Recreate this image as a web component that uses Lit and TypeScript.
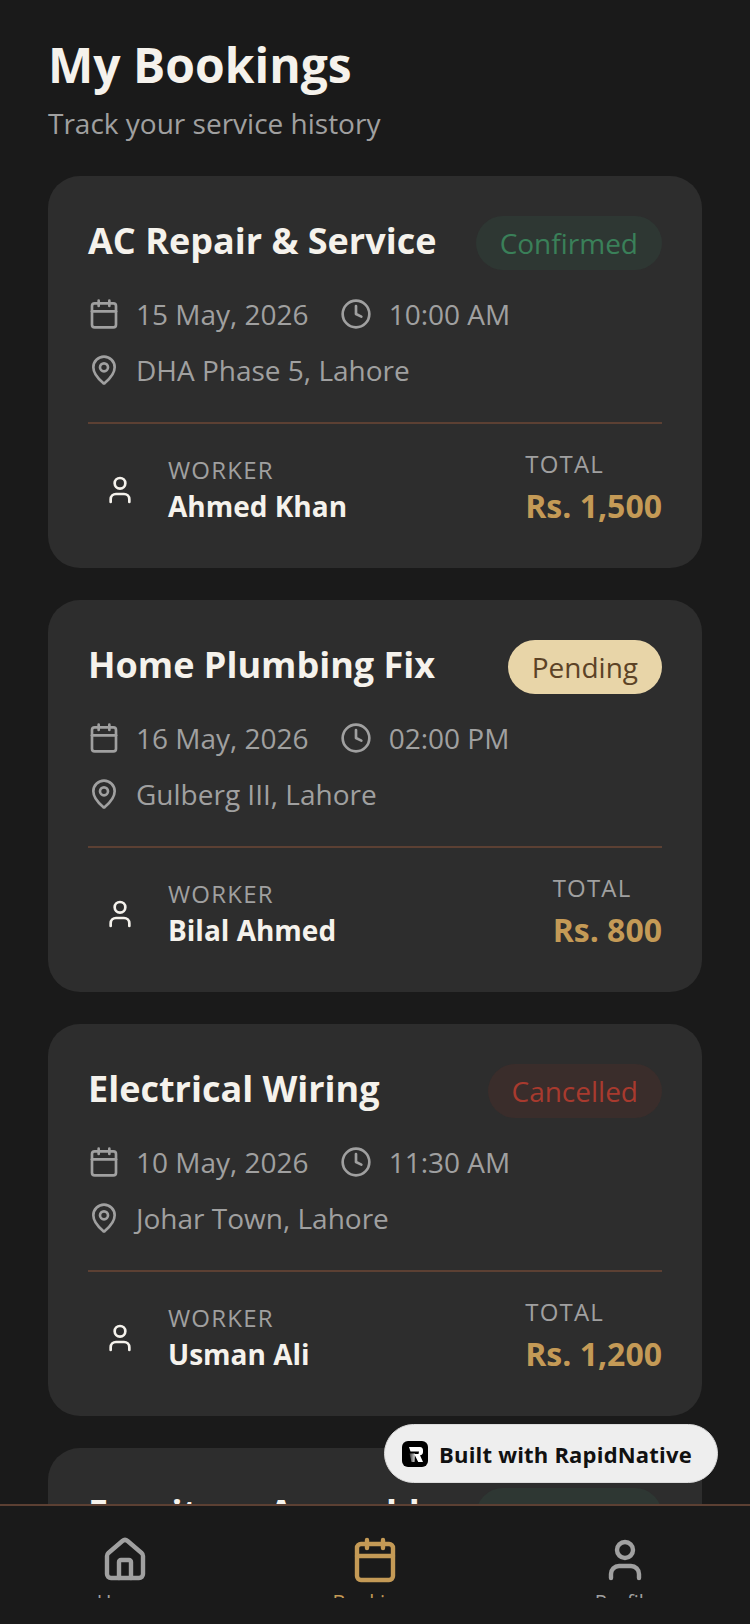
import { LitElement, html, css, svg } from "lit";
import { customElement } from "lit/decorators.js";

const bookings = [
  { title: "AC Repair & Service", status: "Confirmed", cls: "confirmed", date: "15 May, 2026", time: "10:00 AM", place: "DHA Phase 5, Lahore", worker: "Ahmed Khan", total: "Rs. 1,500" },
  { title: "Home Plumbing Fix", status: "Pending", cls: "pending", date: "16 May, 2026", time: "02:00 PM", place: "Gulberg III, Lahore", worker: "Bilal Ahmed", total: "Rs. 800" },
  { title: "Electrical Wiring", status: "Cancelled", cls: "cancelled", date: "10 May, 2026", time: "11:30 AM", place: "Johar Town, Lahore", worker: "Usman Ali", total: "Rs. 1,200" },
  { title: "Furniture Assembly", status: "Confirmed", cls: "confirmed", date: "18 May, 2026", time: "09:00 AM", place: "Model Town, Lahore", worker: "Ali Raza", total: "Rs. 1,000" },
];

const icon = (size: number, sw: number, body: unknown, cls = "") => html`<svg class=${cls} width=${size} height=${size} viewBox="0 0 24 24" fill="none" stroke="currentColor" stroke-width=${sw} stroke-linecap="round" stroke-linejoin="round">${body}</svg>`;
const calendar = svg`<path d="M8 2v4M16 2v4"/><rect x="3" y="4" width="18" height="18" rx="2"/><path d="M3 10h18"/>`;
const clock = svg`<circle cx="12" cy="12" r="10"/><path d="M12 6v6l4 2"/>`;
const pin = svg`<path d="M20 10c0 5-5.5 10.200-7.400 11.800a1 1 0 0 1-1.200 0C9.500 20.200 4 15 4 10a8 8 0 0 1 16 0"/><circle cx="12" cy="10" r="3"/>`;
const user = svg`<path d="M19 21v-2a4 4 0 0 0-4-4H9a4 4 0 0 0-4 4v2"/><circle cx="12" cy="7" r="4"/>`;
const home = svg`<path d="M15 21v-8a1 1 0 0 0-1-1h-4a1 1 0 0 0-1 1v8"/><path d="M3 10a2 2 0 0 1 .7-1.500l7-6a2 2 0 0 1 2.600 0l7 6a2 2 0 0 1 .7 1.500v9a2 2 0 0 1-2 2H5a2 2 0 0 1-2-2z"/>`;

@customElement("app-root")
export class AppRoot extends LitElement {
  static styles = css`
    :host { display: flex; flex-direction: column; width: 750px; height: 1624px; overflow: hidden; position: relative; background: #1a1a1a; font-family: "Open Sans", sans-serif; color: #f5f2ec; }
    .scroll { flex: 1; min-height: 0; overflow: hidden; padding: 33px 48px 0; display: flex; flex-direction: column; }
    h1 { margin: 0; font-size: 48px; line-height: 64px; font-weight: 700; color: #f5f2ec; }
    .sub { margin: 6px 0 0; font-size: 28px; line-height: 40px; color: #a0a0a0; }
    .cards { margin-top: 33px; display: flex; flex-direction: column; gap: 32px; flex: none; }
    .card { background: #2d2d2d; border-radius: 32px; padding: 40px; height: 392px; box-sizing: border-box; flex: none; }
    .head { display: flex; justify-content: space-between; align-items: flex-start; }
    .title { font-size: 36px; line-height: 50px; font-weight: 700; color: #f5f2ec; }
    .badge { font-size: 28px; line-height: 38px; padding: 8px 24px; border-radius: 28px; }
    .confirmed { background: #2e3733; color: #3a8059; }
    .pending { background: #e8d5a8; color: #5c4326; }
    .cancelled { background: #3a2d2b; color: #a83a2e; }
    .rows { margin-top: 24px; display: flex; flex-direction: column; gap: 16px; }
    .row { display: flex; align-items: center; height: 40px; color: #a0a0a0; font-size: 28px; }
    .row svg { flex: none; margin-right: 16px; }
    .row svg.gap { margin-left: 31px; margin-right: 17px; }
    .divider { height: 2px; background: #5c4033; margin-top: 32px; }
    .foot { margin-top: 24px; display: flex; justify-content: space-between; align-items: center; }
    .who { display: flex; align-items: center; }
    .avatar { width: 64px; height: 64px; margin-right: 16px; display: flex; align-items: center; justify-content: center; color: #f5f2ec; }
    .label { font-size: 24px; line-height: 32px; letter-spacing: 1.2px; color: #a0a0a0; }
    .name { font-size: 28px; line-height: 40px; font-weight: 700; color: #f5f2ec; }
    .right { display: flex; flex-direction: column; align-items: flex-end; padding-bottom: 4px; }
    .right .box { display: flex; flex-direction: column; }
    .amount { font-size: 32px; line-height: 44px; font-weight: 700; color: #c49a56; margin-top: 4px; }
    nav { flex: none; height: 120px; box-sizing: border-box; border-top: 2px solid #5c4033; background: #1a1a1a; display: flex; position: relative; }
    .tab { flex: 1; height: 92px; overflow: hidden; display: flex; flex-direction: column; align-items: center; padding-top: 30px; box-sizing: border-box; color: #a0a0a0; }
    .tab svg { flex: none; }
    .tab.on { color: #c49a56; }
    .tab span { flex: none; font-size: 20px; line-height: 28px; margin-top: 4px; }
    .built { position: absolute; left: 384px; top: 1424px; width: 334px; height: 59px; box-sizing: border-box; border-radius: 30px; background: #eeeeee; border: 1px solid #dcdcdc; display: flex; align-items: center; padding-left: 17px; gap: 11px; color: #111; font-size: 22px; font-weight: 700; letter-spacing: .2px; }
    .logo { width: 26px; height: 26px; flex: none; }
  `;

  render() {
    return html`
      <div class="scroll">
        <h1>My Bookings</h1>
        <p class="sub">Track your service history</p>
        <div class="cards">
          ${bookings.map((b) => html`
            <div class="card">
              <div class="head">
                <div class="title">${b.title}</div>
                <div class="badge ${b.cls}">${b.status}</div>
              </div>
              <div class="rows">
                <div class="row">${icon(32, 2, calendar)}${b.date}${icon(32, 2, clock, "gap")}${b.time}</div>
                <div class="row">${icon(32, 2, pin)}${b.place}</div>
              </div>
              <div class="divider"></div>
              <div class="foot">
                <div class="who">
                  <div class="avatar">${icon(32, 2, user)}</div>
                  <div><div class="label">WORKER</div><div class="name">${b.worker}</div></div>
                </div>
                <div class="right"><div class="box"><div class="label">TOTAL</div><div class="amount">${b.total}</div></div></div>
              </div>
            </div>`)}
        </div>
      </div>
      <nav>
        <div class="tab">${icon(48, 2.2, home)}<span>Home</span></div>
        <div class="tab on">${icon(48, 2.2, calendar)}<span>Bookings</span></div>
        <div class="tab">${icon(48, 2.2, user)}<span>Profile</span></div>
      </nav>
      <div class="built">
        <svg class="logo" viewBox="0 0 26 26">
          <defs><linearGradient id="rn" x1="0" y1="0" x2="1" y2="0"><stop offset="0" stop-color="#333"/><stop offset="1" stop-color="#ddd"/></linearGradient></defs>
          <rect width="26" height="26" rx="6" fill="#000"/>
          <path d="M7.500 12.500h5.500l-.5 8.500h-3z" fill="url(#rn)"/>
          <path d="M7 6h11q3 0 3 3.500v1.500q0 2.800-3 3.300l3 6.700h-4.800l-4-8h4.300l.5-2.500H8.500z" fill="#fff"/>
        </svg>
        Built with RapidNative
      </div>
    `;
  }
}
